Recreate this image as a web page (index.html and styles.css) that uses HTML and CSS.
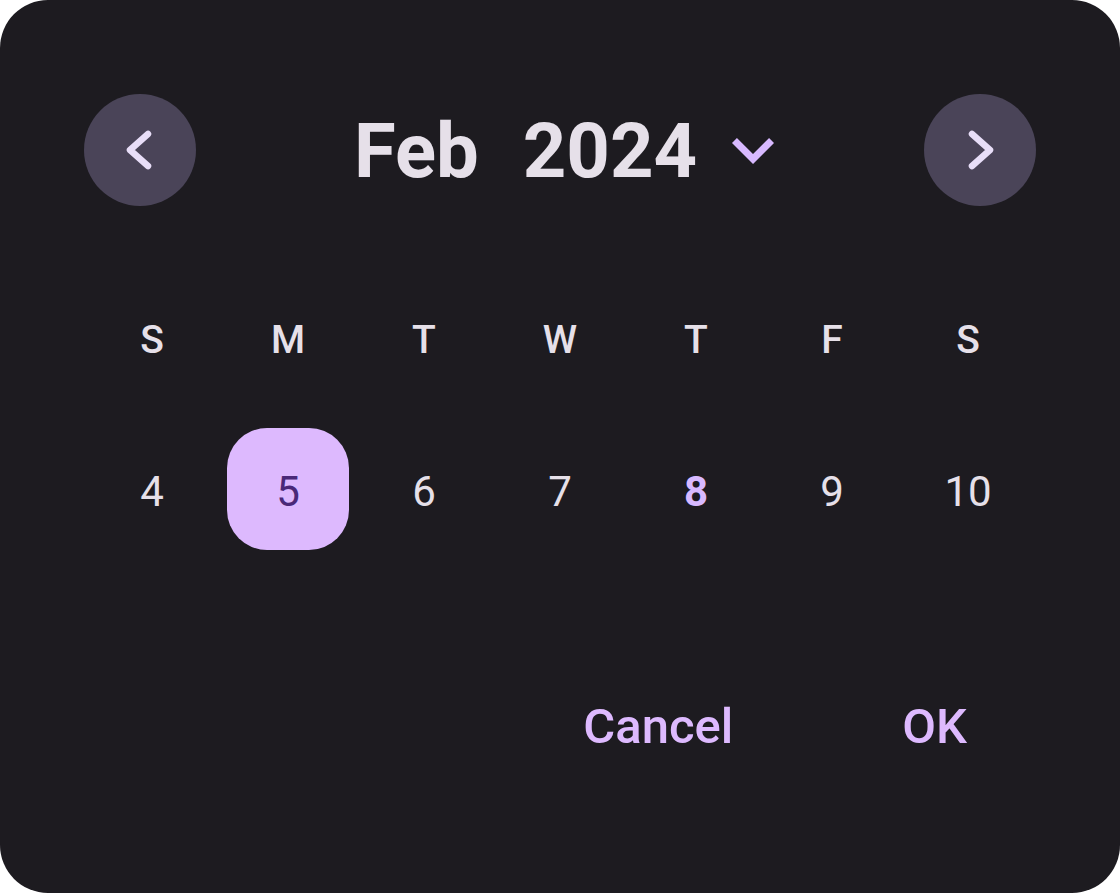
FILE: index.html
```html
<!DOCTYPE html>
<html lang="en">
<head>
<meta charset="utf-8">
<title>Date picker</title>
<link rel="stylesheet" href="styles.css">
</head>
<body>
<div class="dialog">
  <div class="header">
    <button class="nav" aria-label="Previous month">
      <svg width="112" height="112" viewBox="0 0 112 112"><polyline points="64,40 46,56 64,72" fill="none" stroke="#E8DEF8" stroke-width="6.5" stroke-linecap="round" stroke-linejoin="round"/></svg>
    </button>
    <div class="title">
      <span class="month">Feb</span>
      <span class="year">2024</span>
      <svg class="caret" width="84" height="84" viewBox="0 0 24 24"><path d="M16.59 8.59L12 13.17 7.41 8.59 6 10l6 6 6-6z" fill="#D8B9FF"/></svg>
    </div>
    <button class="nav" aria-label="Next month">
      <svg width="112" height="112" viewBox="0 0 112 112"><polyline points="48,40 66,56 48,72" fill="none" stroke="#E8DEF8" stroke-width="6.5" stroke-linecap="round" stroke-linejoin="round"/></svg>
    </button>
  </div>
  <div class="week weekdays">
    <span>S</span><span>M</span><span>T</span><span>W</span><span>T</span><span>F</span><span>S</span>
  </div>
  <div class="week days">
    <span class="day">4</span>
    <span class="day selected">5</span>
    <span class="day">6</span>
    <span class="day">7</span>
    <span class="day today">8</span>
    <span class="day">9</span>
    <span class="day">10</span>
  </div>
  <div class="actions">
    <button class="text-btn">Cancel</button>
    <button class="text-btn">OK</button>
  </div>
</div>
</body>
</html>
```
FILE: styles.css
```css
* { box-sizing: border-box; }
html, body {
  margin: 0;
  padding: 0;
  background: #ffffff;
}
body {
  font-family: Roboto, "Noto Sans", sans-serif;
}
.dialog {
  width: 1120px;
  height: 893px;
  background: #1D1B20;
  border-radius: 48px;
  padding: 94px 84px 0;
  color: #E6E0E9;
}
.header {
  display: flex;
  align-items: center;
  height: 112px;
}
.nav {
  width: 112px;
  height: 112px;
  border-radius: 50%;
  border: none;
  padding: 0;
  background: #4A4458;
  display: flex;
  align-items: center;
  justify-content: center;
  flex: none;
}
.nav svg { display: block; }
.title {
  flex: 1;
  display: flex;
  align-items: center;
  padding-left: 158px;
  padding-top: 2px;
  font-size: 76px;
  font-weight: 700;
  line-height: 1;
  color: #E6E0E9;
}
.year { margin-left: 44px; }
.caret { display: block; margin-left: 14px; margin-top: -2px; }
.week {
  display: grid;
  grid-template-columns: repeat(7, 136px);
}
.weekdays {
  margin-top: 104px;
  height: 60px;
  align-items: center;
  justify-items: center;
  font-size: 39px;
  font-weight: 500;
  color: #E6E0E9;
}
.days {
  margin-top: 58px;
  height: 122px;
  justify-items: center;
  align-items: center;
}
.day {
  width: 122px;
  height: 122px;
  display: flex;
  align-items: center;
  justify-content: center;
  padding-top: 4px;
  font-size: 42px;
  font-weight: 400;
  color: #E6E0E9;
  border-radius: 40px;
}
.day.selected {
  background: #DDB9FE;
  color: #4A2878;
}
.day.today {
  color: #D8B9FF;
  font-weight: 700;
}
.actions {
  margin-top: 136px;
  display: flex;
  justify-content: flex-end;
  gap: 121px;
  padding-right: 45px;
}
.text-btn {
  height: 80px;
  padding: 0 24px;
  border: none;
  background: transparent;
  font-family: Roboto, "Noto Sans", sans-serif;
  font-size: 49px;
  font-weight: 500;
  color: #DDB9FE;
}
```
